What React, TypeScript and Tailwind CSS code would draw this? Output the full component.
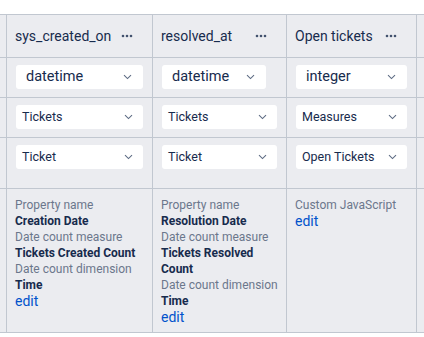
import React from "react";

const font = { fontFamily: "Roboto, 'Noto Sans', 'Liberation Sans', sans-serif" };

function Dots() {
  return (
    <svg width="12" height="4" viewBox="0 0 12 4" className="shrink-0">
      <circle cx="2" cy="2" r="1.3" fill="#42526e" />
      <circle cx="6" cy="2" r="1.3" fill="#42526e" />
      <circle cx="10" cy="2" r="1.3" fill="#42526e" />
    </svg>
  );
}

function Chevron() {
  return (
    <svg width="9" height="6" viewBox="0 0 9 6" className="shrink-0">
      <path d="M1 1.2 L4.5 4.6 L8 1.2" fill="none" stroke="#5e6c84" strokeWidth="1.1" />
    </svg>
  );
}

function Select({ text, big, w }: { text: string; big?: boolean; w: string }) {
  return (
    <div
      className={`flex h-[24px] items-center justify-between rounded-[3px] bg-white ${w} ${
        big ? "pl-[10px] pr-[11px] text-[14.5px]" : "pl-[6px] pr-[10px] text-[12.5px]"
      } text-[#172b4d]`}
    >
      <span className="leading-none">{text}</span>
      <Chevron />
    </div>
  );
}

function Header({ text }: { text: string }) {
  return (
    <div className="flex h-[43px] items-center justify-between border-b border-r border-[#c1c7d0] pl-[8px] pr-[19px]">
      <span className="text-[14px] text-[#172b4d]">{text}</span>
      <Dots />
    </div>
  );
}

function SelCell({ children, h = "h-[40px]" }: { children: React.ReactNode; h?: string }) {
  return (
    <div className={`${h} border-b border-r border-[#c1c7d0] pl-[9px] pt-[7px]`}>{children}</div>
  );
}

function Label({ children }: { children: React.ReactNode }) {
  return <div className="text-[12px] leading-[16px] text-[#6b778c]">{children}</div>;
}
function Val({ children }: { children: React.ReactNode }) {
  return <div className="text-[12px] font-bold leading-[16px] text-[#172b4d]">{children}</div>;
}
function Edit() {
  return <div className="text-[14px] leading-[16px] text-[#0052cc]">edit</div>;
}

export default function App() {
  return (
    <div className="h-[337px] w-[424px] overflow-hidden bg-white pt-[14px]" style={font}>
      <div className="grid grid-cols-[7px_146px_134px_130px_1fr] border-t border-[#c1c7d0] bg-[#ebecf0]">
        {/* header */}
        <div className="h-[43px] border-b border-r border-[#c1c7d0]" />
        <Header text="sys_created_on" />
        <Header text="resolved_at" />
        <Header text="Open tickets" />
        <div className="h-[43px] border-b border-[#c1c7d0]" />

        {/* row type */}
        <div className="h-[40px] border-b border-r border-[#c1c7d0]" />
        <SelCell>
          <Select text="datetime" big w="w-[127px]" />
        </SelCell>
        <SelCell>
          <Select text="datetime" big w="w-[104px]" />
        </SelCell>
        <SelCell>
          <Select text="integer" big w="w-[111px]" />
        </SelCell>
        <div className="h-[40px] border-b border-[#c1c7d0]" />

        {/* row cube */}
        <div className="h-[40px] border-b border-r border-[#c1c7d0]" />
        <SelCell>
          <Select text="Tickets" w="w-[127px]" />
        </SelCell>
        <SelCell>
          <Select text="Tickets" w="w-[115px]" />
        </SelCell>
        <SelCell>
          <Select text="Measures" w="w-[111px]" />
        </SelCell>
        <div className="h-[40px] border-b border-[#c1c7d0]" />

        {/* row member */}
        <div className="h-[51px] border-b border-r border-[#c1c7d0]" />
        <SelCell h="h-[51px]">
          <Select text="Ticket" w="w-[127px]" />
        </SelCell>
        <SelCell h="h-[51px]">
          <Select text="Ticket" w="w-[115px]" />
        </SelCell>
        <SelCell h="h-[51px]">
          <Select text="Open Tickets" w="w-[111px]" />
        </SelCell>
        <div className="h-[51px] border-b border-[#c1c7d0]" />

        {/* details */}
        <div className="h-[144px] border-b border-r border-[#c1c7d0]" />
        <div className="h-[144px] border-b border-r border-[#c1c7d0] pl-[8px] pr-[6px] pt-[8px]">
          <Label>Property name</Label>
          <Val>Creation Date</Val>
          <Label>Date count measure</Label>
          <Val>Tickets Created Count</Val>
          <Label>Date count dimension</Label>
          <Val>Time</Val>
          <Edit />
        </div>
        <div className="h-[144px] border-b border-r border-[#c1c7d0] pl-[8px] pr-[6px] pt-[8px]">
          <Label>Property name</Label>
          <Val>Resolution Date</Val>
          <Label>Date count measure</Label>
          <Val>Tickets Resolved Count</Val>
          <Label>Date count dimension</Label>
          <Val>Time</Val>
          <Edit />
        </div>
        <div className="h-[144px] border-b border-r border-[#c1c7d0] pl-[8px] pr-[6px] pt-[8px]">
          <Label>Custom JavaScript</Label>
          <Edit />
        </div>
        <div className="h-[144px] border-b border-[#c1c7d0]" />
      </div>
    </div>
  );
}
